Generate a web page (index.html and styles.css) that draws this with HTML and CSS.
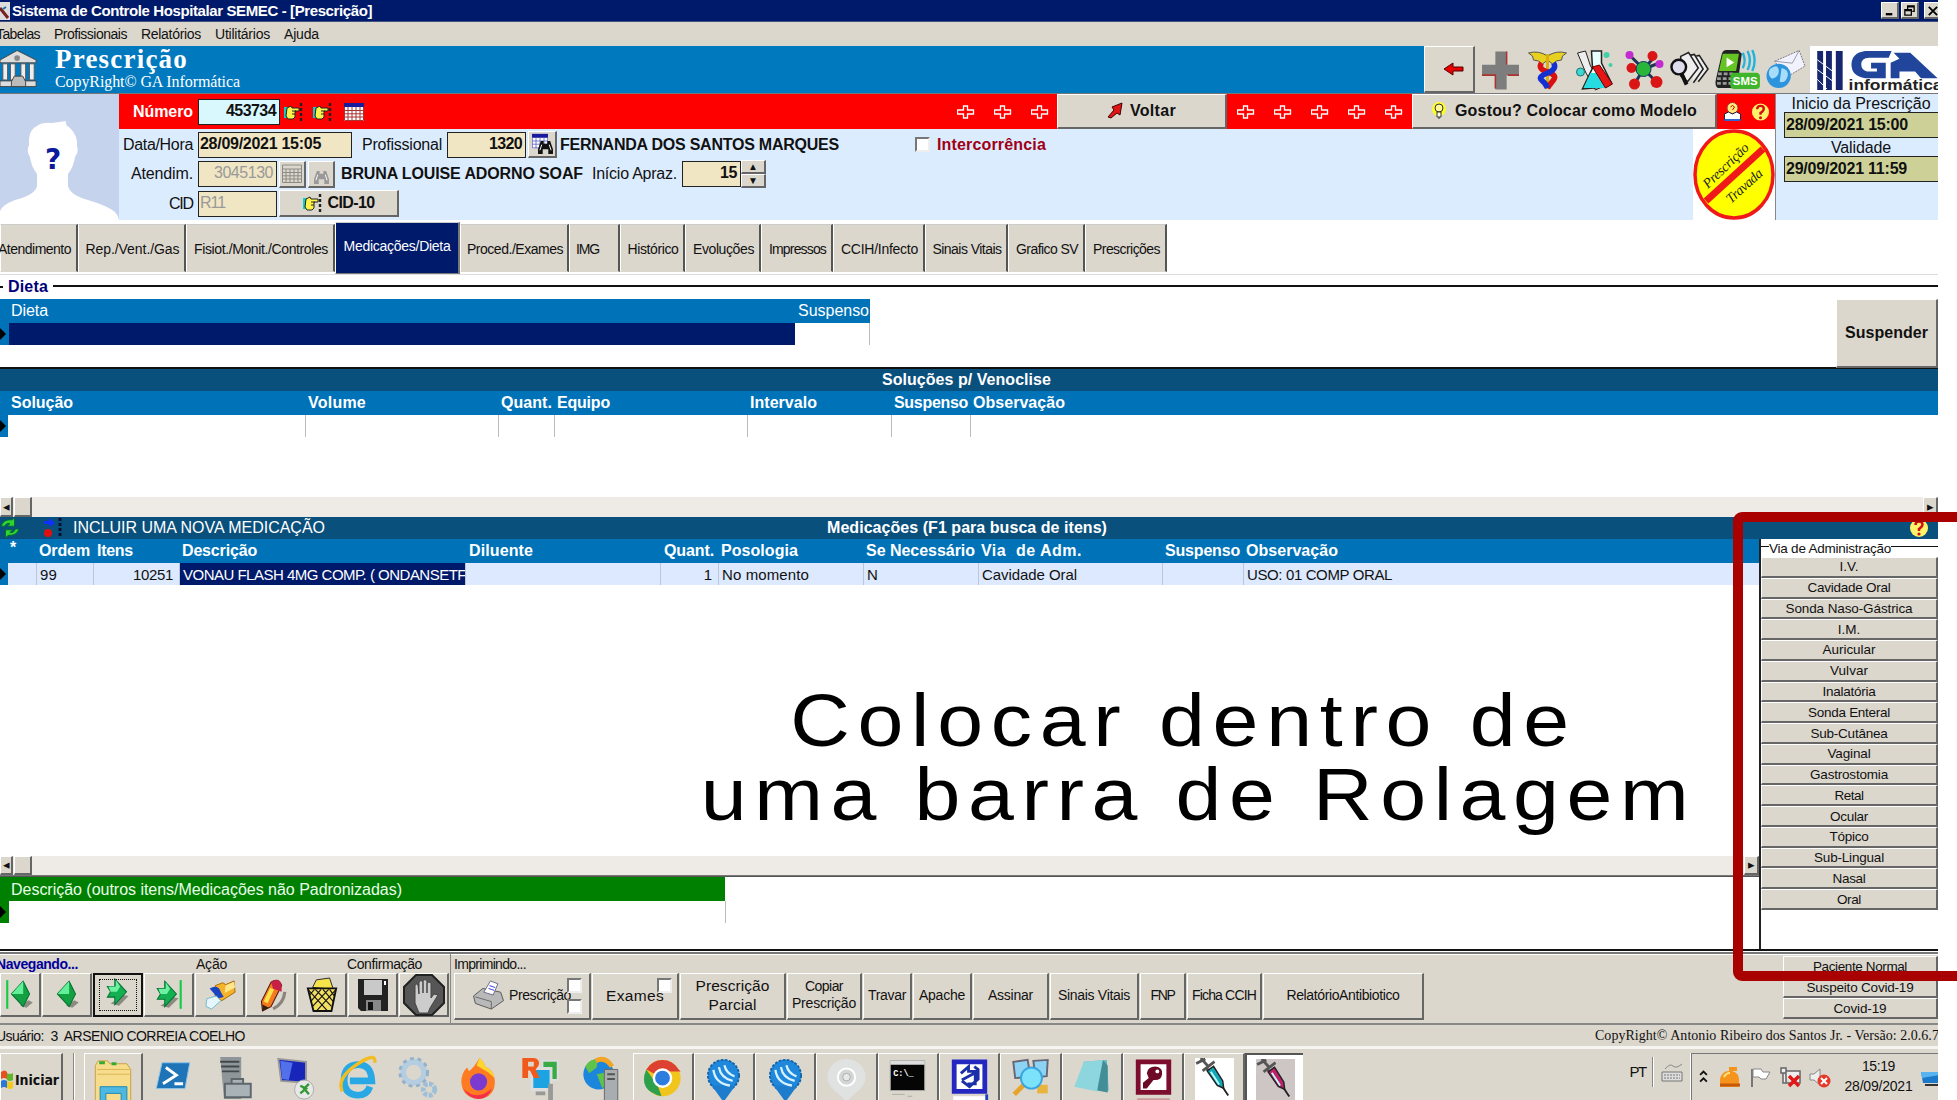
FILE: index.html
```html
<!DOCTYPE html>
<html lang="pt-BR">
<head>
<meta charset="utf-8">
<title>Sistema de Controle Hospitalar SEMEC - [Prescrição]</title>
<link rel="stylesheet" href="styles.css">
</head>
<body>
<svg class="defs" width="0" height="0">
  <defs>
    <symbol id="hand" viewBox="0 0 20 20"><path d="M0 5h4v11H0z" fill="#1cc"/><path d="M3 6l4-2 1 2h7v3h-4v6l-2 2H4L2 14z" fill="#fff34a" stroke="#222" stroke-width="1"/><path d="M8 9h4M8 12h3" stroke="#222"/><path d="M17 1v18" stroke="#222" stroke-width="2.4" stroke-dasharray="3 2"/></symbol>
    <symbol id="cal" viewBox="0 0 20 20"><path d="M0 1h20v18H0z" fill="#fff"/><path d="M0 1h20v4H0z" fill="#1a1a9c"/><path d="M.5 5v13.500h19V5M.5 8.500h19M.5 11.800h19M.5 15h19M4 5v14M8 5v14M12 5v14M16 5v14" stroke="#a33" fill="none"/></symbol>
    <symbol id="calblue" viewBox="0 0 20 20"><path d="M0 1h20v18H0z" fill="#fff"/><path d="M0 1h20v5H0z" fill="#1a1a9c"/><path d="M.5 5v13.500h19V5M.5 10h19M.5 14h19M5 5v14M10 5v14M15 5v14" stroke="#5560c0" fill="none"/></symbol>
    <symbol id="calgray" viewBox="0 0 20 20"><path d="M.5 1h19v4H.5zM.5 5v13.500h19V5M.5 8.500h19M.5 11.800h19M.5 15h19M4 5v14M8 5v14M12 5v14M16 5v14" stroke="#8d8a85" fill="none"/></symbol>
    <symbol id="bino" viewBox="0 0 16 15"><path d="M3 1h3v3h4V1h3l3 9v5h-5v-5H5v5H0v-5z" fill="currentColor"/><path d="M2 11l2-6M14 11l-2-6" stroke="#fff"/></symbol>
    <symbol id="cross" viewBox="0 0 18 14"><path d="M6.500 1h4v4h6v4h-6v4h-4V9h-6V5h6z" fill="#f00" stroke="#fff" stroke-width="1.300"/></symbol>
    <symbol id="green-right" viewBox="0 0 24 28"><path d="M5 24l8 2 9-9-5-1z" fill="#8b8b80"/><path d="M2 8h7V1l11 12L9 25v-7H2l3-5z" fill="#12b050" stroke="#067337"/><path d="M3 8h7V2l4 6-3 5H5z" fill="#6df0a0"/></symbol>
    <symbol id="green-left" viewBox="0 0 24 28"><path d="M10 24l6 2 6-5-4-2z" fill="#8b8b80"/><path d="M2 13L13 1l6 12-6 12z" fill="#12a040" stroke="#067337"/><path d="M2 13L13 1v12z" fill="#63ee98"/></symbol>
    <symbol id="pin" viewBox="0 0 38 48"><circle cx="19" cy="19" r="17" fill="#1f87dc" stroke="#1264a8" stroke-width="2" stroke-dasharray="3 1.500"/><path d="M6 30l13 18 13-18z" fill="#1d7ccc"/><path d="M8 13q2 15 18 17M14 10q2 12 15 15M20 8q2 9 11 12" stroke="#d8f2ff" stroke-width="2.500" fill="none"/></symbol>
    <symbol id="ask" viewBox="0 0 20 20"><circle cx="10" cy="10" r="9" fill="#fff36a"/><path d="M6.500 7q0-3.500 3.500-3.500t3.500 3q0 2-3.500 4.500v2" fill="none" stroke="#d31010" stroke-width="2.500"/><circle cx="10" cy="16" r="1.600" fill="#d31010"/></symbol>
    <symbol id="syringe" viewBox="0 0 40 48"><path d="M5 0l8 9M0 6l10-5M7 14L20 4M10 10l5 5" stroke="#555" stroke-width="3"/><path d="M12 14l7-5 10 16 1 8-7-3z" fill="currentColor" stroke="#222" stroke-width="1.600"/><path d="M16 15l9 14" stroke="#bff" stroke-width="2"/><path d="M29 32l6 9" stroke="#222" stroke-width="2"/></symbol>
  </defs>
</svg>

<div class="app">
  <header class="titlebar">
    <svg class="appicon" viewBox="0 0 10 18"><path d="M0 0h10v18H0z" fill="#ddd"/><path d="M0 6l8 10" stroke="#722" stroke-width="3"/><path d="M3 7l3-2" stroke="#17a" stroke-width="2"/></svg>
    <span class="title" data-w="360">Sistema de Controle Hospitalar SEMEC - [Prescrição]</span>
    <div class="winbtns"><i class="bevel"><svg viewBox="0 0 16 14"><path d="M4 11h7" stroke="#000" stroke-width="2.500"/></svg></i><i class="bevel"><svg viewBox="0 0 16 14"><path d="M6 6V2h7v6h-2M6 3h7M3 6h7v6H3zM3 7h7" stroke="#000" fill="none" stroke-width="1.400"/></svg></i><i class="bevel last"><svg viewBox="0 0 16 14"><path d="M4 3l9 9M13 3l-9 9" stroke="#000" stroke-width="2"/></svg></i></div>
  </header>
  <nav class="menubar"><span data-w="44">Tabelas</span><span data-w="73">Profissionais</span><span data-w="60">Relatórios</span><span data-w="55">Utilitários</span><span data-w="35">Ajuda</span></nav>

  <section class="banner">
    <svg class="temple" viewBox="0 0 40 40"><path d="M0 10L18 0l20 10v3H0zM0 32h38v6H0z" fill="#ddd" stroke="#444"/><path d="M3 14h5v17H3zM11 14h5v17h-5zM22 14h5v17h-5zM31 14h5v17h-5z" fill="#eee" stroke="#555"/><path d="M12 33l3-6h9l3 6v5H12z" fill="#bbb" stroke="#444"/><circle cx="18" cy="8" r="3" fill="#888"/></svg>
    <div class="brand"><h1 data-w="133">Prescrição</h1><p data-w="185">CopyRight© GA Informática</p></div>
    <div class="bevel back"><svg viewBox="0 0 20 14"><path d="M0 7l9-6v4h10v4H9v4z" fill="#e80000" stroke="#500"/></svg></div>
    <div class="tools">
      <svg viewBox="0 0 38 38"><path d="M14 1h11v13h12v10H25v14H14V24H1V14h13z" fill="#7d7d7d"/><path d="M25 1v13M1 24h13v13M26 24h11" stroke="#a33" stroke-width="1.500" fill="none"/></svg>
      <svg viewBox="0 0 38 40"><path d="M19 6Q10 0 0 3l4 3 1 4 5 1 4 3 5-4 5 4 4-3 5-1 1-4 4-3Q28 0 19 6z" fill="#e8d020" stroke="#555"/><path d="M19 4v35" stroke="#d9b010" stroke-width="3"/><path d="M13 13q-4 6 6 9t6 8-6 8" stroke="#d81010" stroke-width="5.500" fill="none"/><path d="M25 13q4 6-6 10t-6 7 6 8" stroke="#1530d0" stroke-width="5.500" fill="none"/></svg>
      <svg viewBox="0 0 38 40"><path d="M1 3l8-2 5 15 13 20-8 4L9 22z" fill="#eee" stroke="#222"/><path d="M15 1h10v12l10 20-6 4L6 39l10-21z" fill="#e8ffff" stroke="#222" stroke-width="1.500"/><path d="M14 23h8l8 15H7z" fill="#26dce0"/><path d="M16 17l7-2 13 19-7 4z" fill="#e51515" stroke="#600"/><circle cx="30" cy="5" r="3" fill="#3fd2a8"/><circle cx="34" cy="15" r="2" fill="#3fd2a8"/><circle cx="4" cy="22" r="4" fill="#40d8d0" stroke="#177"/></svg>
      <svg viewBox="0 0 38 40"><path d="M5 6l13 13L29 7M18 19L9 34M18 19l13 13M18 19L5 19M18 19l16-6" stroke="#235" stroke-width="3" fill="none"/><circle cx="4" cy="5" r="4" fill="#c22bd0"/><circle cx="6" cy="18" r="5" fill="#d91515"/><circle cx="27" cy="6" r="5" fill="#d91515"/><circle cx="34" cy="14" r="4" fill="#c22bd0"/><circle cx="18" cy="19" r="7.500" fill="#27b53a" stroke="#136"/><circle cx="9" cy="34" r="5.500" fill="#d91515"/><circle cx="31" cy="32" r="6" fill="#d91515"/></svg>
      <svg viewBox="0 0 40 38"><path d="M26 5l4-1 9 14-10 13M20 4l5-1 9 15-10 14" fill="#eee" stroke="#222" stroke-width="1.600"/><path d="M11 5l8-4 10 16-11 14-7-6z" fill="#eee" stroke="#222" stroke-width="1.600"/><circle cx="9" cy="16" r="7.500" fill="#dde" stroke="#111" stroke-width="2.500"/><path d="M12 23l5 11" stroke="#111" stroke-width="4"/></svg>
      <svg class="phone" viewBox="0 0 48 42"><path d="M7 4Q8 0 12 0h12l4 4-5 36H3Q-1 38 1 30z" fill="#222"/><path d="M8 4h17l-3 18H4z" fill="#65c423"/><path d="M12 8l8 5-8 5z" fill="#fff"/><path d="M3 25h16M2 30h16M2 35h16" stroke="#999" stroke-width="3" stroke-dasharray="4 2"/><path d="M29 3q4 8 0 16M34 1q5 10 0 20M39 0q5 11 0 22" stroke="#22b4dd" stroke-width="2.500" fill="none"/><rect x="16" y="24" width="31" height="17" rx="4" fill="#3fb52c"/><text x="31.500" y="37" class="sms">SMS</text></svg>
      <svg viewBox="0 0 40 40"><path d="M9 11L34 0l6 16-20 12z" fill="#f2f2ff" stroke="#777" stroke-dasharray="2 1"/><path d="M9 11l18 2L34 0" fill="none" stroke="#99a"/><circle cx="13" cy="26" r="12.500" fill="#2c93dd"/><path d="M4 19q8-6 9 1t-7 9q-5-4-2-10M16 18q8 2 6 9t-8 5z" fill="#a8dcfb"/></svg>
    </div>
    <div class="logo"><svg viewBox="0 0 128 48"><path d="M6 5h6v40H6zM15 5h6v40h-6zM25 5h7v40h-7z" fill="#17276f"/><path d="M6 14l16 12M6 24l16 12M6 34l10 10" stroke="#fff"/><path d="M82 5H55q-14 2-14 14t14 14h21V17H61v6h6v3H57q-6-1-6-7 0-7 8-7h20zM84 7h17l28 26h-17l-6-7H90v7h-9V17l9-4z" fill="#20459b"/><text x="38" y="45" class="logotext" textLength="96" lengthAdjust="spacingAndGlyphs">informática</text></svg></div>
  </section>

  <section class="record">
    <div class="photo"><svg viewBox="0 0 119 126"><path d="M0 126v-9q2-6 15-11 20-5 22-14V80q-6-8-7-17-4-6-1-12-1-15 8-19 5-4 15-3l14-2q-1 4 3 6 9 8 8 19 2 6-2 11-1 9-7 17v12q2 9 20 14 20 6 27 12 3 3 4 8z" fill="#fff"/><text x="45" y="75" class="q">?</text></svg></div>
    <div class="fields">
      <div class="redband">
        <span class="lbl" data-w="60">Número</span><span class="inp cyan"><b data-w="50">453734</b></span>
        <svg class="i1"><use href="#hand"/></svg><svg class="i1"><use href="#hand"/></svg><svg class="i1"><use href="#cal"/></svg>
        <span class="crosses c3"><svg><use href="#cross"/></svg><svg><use href="#cross"/></svg><svg><use href="#cross"/></svg></span>
        <span class="bevel voltar"><svg viewBox="0 0 16 16"><path d="M15 0l-2 12-3-2-6 5-3-1 6-7-2-3z" fill="#e01515" stroke="#400"/></svg><b data-w="46">Voltar</b></span>
        <span class="crosses c5"><svg><use href="#cross"/></svg><svg><use href="#cross"/></svg><svg><use href="#cross"/></svg><svg><use href="#cross"/></svg><svg><use href="#cross"/></svg></span>
        <span class="bevel modelo"><svg viewBox="0 0 16 18"><circle cx="8" cy="7" r="7" fill="#ffff20"/><circle cx="8" cy="6" r="4" fill="#fff79a" stroke="#333"/><path d="M6 10h4v5H6zM7 16h2" fill="#ffe" stroke="#333"/></svg><b data-w="242">Gostou? Colocar como Modelo</b></span>
        <span class="redicons"><svg viewBox="0 0 18 20"><circle cx="9" cy="6" r="5.500" fill="#ffe97a" stroke="#a33"/><path d="M7 5q2-3 4 0l-2 3" stroke="#c00" fill="none"/><path d="M1 12l4-2 4 2 4-2 4 2v6H1z" fill="#fff" stroke="#224"/><path d="M1 18h16" stroke="#36c" stroke-width="2"/></svg><svg><use href="#ask"/></svg></span>
      </div>
      <div class="form">
        <div class="rows">
          <div class="row r1"><span class="lbl" data-w="70">Data/Hora</span><span class="inp l"><b data-w="121">28/09/2021 15:05</b></span><span class="lbl" data-w="80">Profissional</span><span class="inp"><b data-w="33">1320</b></span><span class="bevel sq two"><svg class="cal"><use href="#calblue"/></svg><svg class="bino"><use href="#bino"/></svg></span><b class="name" data-w="279">FERNANDA DOS SANTOS MARQUES</b><i class="check"></i><b class="inter" data-w="109">Intercorrência</b></div>
          <div class="row r2"><span class="lbl" data-w="62">Atendim.</span><span class="inp off"><span data-w="59">3045130</span></span><span class="bevel sq"><svg class="cal"><use href="#calgray"/></svg></span><span class="bevel sq"><svg class="bino off"><use href="#bino"/></svg></span><b class="name clip" data-w="242">BRUNA LOUISE ADORNO SOAF</b><span class="lbl" data-w="85">Início Apraz.</span><span class="inp"><b data-w="17">15</b></span><span class="spin"><i class="bevel">▲</i><i class="bevel">▼</i></span></div>
          <div class="row r3"><span class="lbl" data-w="24">CID</span><span class="inp l off"><span data-w="25">R11</span></span><span class="bevel cid"><svg class="i1"><use href="#hand"/></svg><b data-w="47">CID-10</b></span></div>
        </div>
        <div class="locked"><svg viewBox="0 0 82 91"><rect width="82" height="91" fill="#fff"/><ellipse cx="41" cy="45.500" rx="39" ry="43.500" fill="#ff0" stroke="#f01818" stroke-width="3.500"/><path d="M13 72L70 20" stroke="#f01818" stroke-width="7"/><text class="script" transform="translate(15 60) rotate(-44)" textLength="58">Prescrição</text><text class="script" transform="translate(38 75) rotate(-42)" textLength="44">Travada</text></svg></div>
      </div>
    </div>
    <aside class="validity"><span class="vl" data-w="139">Inicio da Prescrição</span><span class="inp l olive"><b data-w="122">28/09/2021 15:00</b></span><span class="vl" data-w="60">Validade</span><span class="inp l olive"><b data-w="121">29/09/2021 11:59</b></span></aside>
  </section>

  <nav class="tabs"><span><i data-w="73">Atendimento</i></span><span><i data-w="94">Rep./Vent./Gas</i></span><span><i data-w="134">Fisiot./Monit./Controles</i></span><span class="sel"><i data-w="107">Medicações/Dieta</i></span><span><i data-w="96">Proced./Exames</i></span><span class="img"><i data-w="23">IMG</i></span><span><i data-w="51">Histórico</i></span><span><i data-w="61">Evoluções</i></span><span><i data-w="57">Impressos</i></span><span><i data-w="77">CCIH/Infecto</i></span><span><i data-w="69">Sinais Vitais</i></span><span><i data-w="62">Grafico SV</i></span><span><i data-w="67">Prescrições</i></span></nav>

  <section class="diet">
    <div class="legend"><hr><b data-w="40">Dieta</b><hr></div>
    <div class="dietbody">
      <div class="dtable"><div class="dhead"><span data-w="37">Dieta</span><span data-w="71">Suspenso</span></div><div class="drow"><i class="mark"></i><i class="fill"></i><i></i></div></div>
      <div class="bevel suspender"><b data-w="83">Suspender</b></div>
    </div>
  </section>

  <section class="solutions">
    <div class="band"><b data-w="169">Soluções p/ Venoclise</b></div>
    <div class="thead sol"><b data-w="62">Solução</b><b data-w="58">Volume</b><b data-w="51">Quant.</b><b data-w="53">Equipo</b><b data-w="67">Intervalo</b><b data-w="74">Suspenso</b><b data-w="92">Observação</b></div>
    <div class="trow sol"><i class="mark"></i><i></i><i></i><i></i><i></i><i></i><i></i></div>
    <div class="hscroll"><i class="bevel arr">◂</i><i class="bevel thumb"></i><i class="bevel arr end">▸</i></div>
  </section>

  <div class="lower">
    <div class="band meds"><svg viewBox="0 0 22 22"><path d="M1 9q3-8 12-7l3-2v9H8l3-3q-4-1-6 3zM21 12q-3 8-12 7l-3 3v-9h8l-3 3q4 1 6-4z" fill="#2fd52f" stroke="#063"/></svg><svg viewBox="0 0 20 20"><path d="M1 3h5V0l6 5-6 4V6H1z" fill="#1030ff"/><circle cx="5" cy="15" r="4" fill="#e01010"/><path d="M17 0v20" stroke="#013" stroke-width="3" stroke-dasharray="3 2"/></svg><span class="include" data-w="252">INCLUIR UMA NOVA MEDICAÇÃO</span><b data-w="280">Medicações (F1 para busca de itens)</b><svg class="help"><use href="#ask"/></svg></div>
    <div class="split">
      <div class="left">
        <div class="thead med"><b>*</b><b data-w="51">Ordem</b><b data-w="36">Itens</b><b data-w="75">Descrição</b><b data-w="64">Diluente</b><b data-w="50">Quant.</b><b data-w="77">Posologia</b><b data-w="109">Se Necessário</b><b data-w="101">Via  de Adm.</b><b data-w="75">Suspenso</b><b data-w="92">Observação</b></div>
        <div class="trow med"><i class="mark"></i><span></span><span><u data-w="17">99</u></span><span class="r"><u data-w="40">10251</u></span><span class="fill"><u data-w="283">VONAU FLASH 4MG COMP. ( ONDANSETF</u></span><span></span><span class="r"><u>1</u></span><span><u data-w="87">No momento</u></span><span><u>N</u></span><span><u data-w="95">Cavidade Oral</u></span><span></span><span class="noline"><u data-w="145">USO: 01 COMP ORAL</u></span></div>
        <div class="note"><p data-w="715">Colocar dentro de</p><p data-w="905">uma barra de Rolagem</p></div>
        <div class="hscroll"><i class="bevel arr">◂</i><i class="bevel thumb"></i><i class="bevel arr end">▸</i></div>
        <div class="others"><div class="ohead"><span data-w="391">Descrição (outros itens/Medicações não Padronizadas)</span></div><div class="orow"><i class="mark"></i></div></div>
      </div>
      <aside class="routes">
        <div class="rlegend"><hr><span data-w="122">Via de Administração</span><hr></div>
        <div class="bevel"><i>I.V.</i></div><div class="bevel"><i data-w="83">Cavidade Oral</i></div><div class="bevel"><i data-w="127">Sonda Naso-Gástrica</i></div><div class="bevel"><i>I.M.</i></div><div class="bevel"><i data-w="53">Auricular</i></div><div class="bevel"><i data-w="38">Vulvar</i></div><div class="bevel"><i data-w="53">Inalatória</i></div><div class="bevel"><i data-w="82">Sonda Enteral</i></div><div class="bevel"><i data-w="77">Sub-Cutânea</i></div><div class="bevel"><i data-w="43">Vaginal</i></div><div class="bevel"><i data-w="78">Gastrostomia</i></div><div class="bevel"><i data-w="29">Retal</i></div><div class="bevel"><i data-w="38">Ocular</i></div><div class="bevel"><i data-w="39">Tópico</i></div><div class="bevel"><i data-w="70">Sub-Lingual</i></div><div class="bevel"><i data-w="33">Nasal</i></div><div class="bevel"><i data-w="24">Oral</i></div>
      </aside>
    </div>
  </div>

  <section class="toolbar">
    <div class="group nav">
      <div class="labels"><b data-w="82">Navegando...</b><span data-w="31">Ação</span><span data-w="75">Confirmação</span></div>
      <div class="btns">
        <i class="bevel"><svg viewBox="0 0 30 32"><path d="M3 2v27" stroke="#1c4" stroke-width="2"/><use href="#green-left" x="5" y="2" width="24" height="28"/></svg></i>
        <i class="bevel"><svg viewBox="0 0 30 32"><use href="#green-left" x="4" y="2" width="24" height="28"/></svg></i>
        <i class="bevel focus"><svg viewBox="0 0 30 32"><use href="#green-right" x="3" y="0" width="24" height="28"/></svg></i>
        <i class="bevel"><svg viewBox="0 0 30 32"><path d="M26 2v27" stroke="#1c4" stroke-width="2"/><use href="#green-right" x="2" y="2" width="24" height="28"/></svg></i>
        <i class="bevel"><svg viewBox="0 0 34 32"><path d="M12 6l8-3 3 2 9-4 1 12-14 9-7-4z" fill="#f5b32c" stroke="#a60"/><path d="M23 6l9-4 1 6-11 6z" fill="#ffe68a"/><path d="M6 9q9-5 12 4l3 5-7 2-3-5z" fill="#1b45c0"/><path d="M3 20l10-3 5 5-10 9-6-3z" fill="#e6f6fa" stroke="#6bc"/></svg></i>
        <i class="bevel"><svg viewBox="0 0 30 32"><path d="M17 29q10-5 11-16" stroke="#8a857c" stroke-width="3" fill="none"/><path d="M6 22L15 4q7-5 10 3L15 27l-8 4z" fill="#f47c20" stroke="#511"/><path d="M15 4q8-6 10 3v6l-8-3z" fill="#c82045"/><path d="M10 23l6-13" stroke="#ffe24a" stroke-width="4"/><path d="M7 31v-6l6 3z" fill="#321"/></svg></i>
        <i class="bevel"><svg viewBox="0 0 32 36"><path d="M6 10L10 2l14-2 4 12z" fill="#f7e34a" stroke="#222"/><path d="M1 11h30l-5 24H7z" fill="#f2df62" stroke="#111" stroke-width="2"/><path d="M2 13l20 22M9 12l17 18M17 12l11 13M24 12l5 7M30 13L10 35M23 12L6 30M15 12L4 25M8 12l-5 6" stroke="#111" stroke-width="1.200"/></svg></i>
        <i class="bevel"><svg viewBox="0 0 32 34"><path d="M1 1h30v32H4l-3-3z" fill="#222"/><path d="M7 2h18v15H7z" fill="#c9c9c9"/><path d="M9 22h15v11H9z" fill="#888"/><path d="M11 24h5v8h-5z" fill="#111"/><path d="M27 3h2v4h-2z" fill="#fff"/></svg></i>
        <i class="bevel wide"><svg viewBox="0 0 40 40"><path d="M12 0h16l12 12v16L28 40H12L0 28V12z" fill="#565656" stroke="#222" stroke-width="2"/><path d="M11 10q2-2 3 0l1 9V7q2-3 4 0v11-12q2-3 4 0v12-10q2-2 4 0v15l3-4 4 1-8 13-2 5H15l-4-10z" fill="#ccc" stroke="#444"/></svg></i>
      </div>
    </div>
    <div class="group print">
      <div class="labels"><span data-w="72">Imprimindo...</span></div>
      <div class="btns">
        <div class="bevel b1"><svg viewBox="0 0 34 32"><path d="M1 17l10-8 19 4 3 9-13 9L3 25z" fill="#b9b9b9" stroke="#555"/><path d="M3 18l17 5v8" stroke="#666" fill="none"/><path d="M12 13l7-12 8 3-5 12z" fill="#fff" stroke="#668"/><path d="M17 9l6 2M18 6l6 2" stroke="#33d"/></svg><span data-w="62">Prescrição</span><i class="check"></i><i class="check"></i></div>
        <div class="bevel b2"><span data-w="58">Exames</span><i class="check"></i></div>
        <div class="bevel big"><span data-w="74">Prescrição</span><span data-w="48">Parcial</span></div>
        <div class="bevel"><span data-w="38">Copiar</span><span data-w="64">Prescrição</span></div>
        <div class="bevel"><span data-w="38">Travar</span></div>
        <div class="bevel"><span data-w="46">Apache</span></div>
        <div class="bevel"><span data-w="45">Assinar</span></div>
        <div class="bevel tall"><span data-w="72">Sinais Vitais</span></div>
        <div class="bevel"><span data-w="24">FNP</span></div>
        <div class="bevel"><span data-w="64">Ficha CCIH</span></div>
        <div class="bevel"><span data-w="113">RelatórioAntibiotico</span></div>
      </div>
    </div>
    <div class="covid"><div class="bevel"><span data-w="94">Paciente Normal</span></div><div class="bevel"><span data-w="107">Suspeito Covid-19</span></div><div class="bevel"><span data-w="53">Covid-19</span></div></div>
  </section>

  <div class="status"><span data-w="249">Usuário:  3  ARSENIO CORREIA COELHO</span><span class="copy" data-w="351">CopyRight© Antonio Ribeiro dos Santos Jr. - Versão: 2.0.6.75</span></div>

  <footer class="taskbar">
    <div class="bevel start"><svg viewBox="0 0 12 20"><path d="M0 2q4-3 6 0v7q-3-2-6 0z" fill="#e85020"/><path d="M6 3q3 2 6 0v7q-3 2-6 0z" fill="#5cb82c"/><path d="M0 11q3-2 6 0v7q-3-2-6 0z" fill="#2878d8"/><path d="M6 11q3 2 6 0v7q-3 2-6 0z" fill="#f7c81c"/></svg><b data-w="44">Iniciar</b></div>
    <i class="sep"></i>
    <div class="task raised"><svg viewBox="0 0 40 46"><path d="M1 8l3-5h10l2 3h18l4 6v34H1z" fill="#f6dc8b" stroke="#c9a040"/><path d="M5 5h6M18 6h5" stroke="#3a3" stroke-width="3"/><path d="M3 12h34M3 17h34" stroke="#d8b454"/><path d="M6 46V30h28v16h-6V37H12v9z" fill="#4db8e0" stroke="#1d86b4"/></svg></div>
    <div class="task"><svg viewBox="0 0 40 46"><path d="M8 6h29l-5 27H2z" fill="#1f74b8" stroke="#8ac4ea"/><path d="M12 11l11 8-14 9M21 28h9" stroke="#fff" stroke-width="3" fill="none"/></svg></div>
    <div class="task"><svg viewBox="0 0 40 46"><path d="M5 0h22v44H9z" fill="#8f9699"/><path d="M5 5h20M6 10h19M7 15h18" stroke="#40484c" stroke-width="2"/><path d="M10 28h27v14H10zM17 28v-5h12v5" fill="#a9b3b7" stroke="#5c666b" stroke-width="2"/></svg></div>
    <div class="task"><svg viewBox="0 0 40 46"><path d="M2 2l29 3v22L5 25z" fill="#1726b8" stroke="#999" stroke-width="2"/><path d="M4 4l13 2-4 18-7-1z" fill="#5270ea"/><circle cx="29" cy="34" r="10" fill="#e8e8e8" stroke="#aaa"/><path d="M25 30l6 3-6 5M34 28l-5 5 5 6" stroke="#393" stroke-width="2.500" fill="none"/></svg></div>
    <div class="task"><svg viewBox="0 0 40 46"><path d="M33 31q-3 9-13 9Q6 39 6 24T20 8t15 17H12" fill="none" stroke="#29a8e6" stroke-width="7"/><path d="M4 36Q-2 22 19 8T38 6" fill="none" stroke="#f2bd22" stroke-width="3.500"/></svg></div>
    <div class="task"><svg viewBox="0 0 40 46"><circle cx="15" cy="16" r="11" fill="none" stroke="#b4cde0" stroke-width="6"/><circle cx="15" cy="16" r="14.500" fill="none" stroke="#93b1c8" stroke-width="3" stroke-dasharray="4 4"/><circle cx="31" cy="34" r="6" fill="none" stroke="#9dbfd9" stroke-width="5" stroke-dasharray="4 1.500"/></svg></div>
    <div class="task"><svg viewBox="0 0 40 46"><path d="M20 1q5 4 6 9 9 4 10 14 1 18-17 20Q2 43 1 26 1 17 7 11l2 4q6-5 11-14z" fill="#ff7b22"/><path d="M20 1q5 4 6 9 8 4 10 12l-7-6-12-7z" fill="#ffd62e"/><circle cx="19" cy="26" r="9" fill="#7b3bd0"/><path d="M3 33q14 14 30 0-4 11-14 11T3 33z" fill="#f5304b"/></svg></div>
    <div class="task"><svg viewBox="0 0 40 46"><path d="M22 4h16v20H22z" fill="#38ab45" stroke="#ddd" stroke-width="2"/><path d="M11 12h20v22H11z" fill="#1ca4e2" stroke="#ddd" stroke-width="3"/><path d="M1 1h12q7 1 5 8l-3 4 4 9h-6l-4-8H7v8H1zM7 5v5h6V5z" fill="#f15a1c" fill-rule="evenodd"/><path d="M15 36h10v4H15zM28 28h5v17h-5z" fill="#999"/></svg></div>
    <div class="task"><svg viewBox="0 0 40 46"><circle cx="17" cy="18" r="16" fill="#1c86dc"/><path d="M3 10q5-9 13-7l-1 8-8 6zM15 18l10-2 4 8-8 9z" fill="#5fc24a"/><path d="M14 4q10-5 17 6" stroke="#f3a422" stroke-width="5" fill="none"/><path d="M23 13h14v33H23z" fill="#a7adb0" stroke="#666"/><path d="M26 18h8M26 23h8" stroke="#555" stroke-width="2"/></svg></div>
    <div class="task raised"><svg viewBox="0 0 40 46"><circle cx="20" cy="21" r="19" fill="#f2c51d"/><path d="M20 21L3 12Q9 2 20 2t17 10l2 2H20z" fill="#dd4132"/><path d="M3 12l12 17 4 11Q-6 34 3 12z" fill="#2da04e"/><circle cx="20" cy="21" r="9" fill="#2d7de0" stroke="#fff" stroke-width="2.500"/></svg></div>
    <div class="task raised"><svg><use href="#pin"/></svg></div>
    <div class="task raised"><svg><use href="#pin"/></svg></div>
    <div class="task raised"><svg viewBox="0 0 40 46"><path d="M0 20a20 19 0 0 1 40 0q0 9-12 18l-8 8-8-8Q0 29 0 20z" fill="#e0e1e1"/><circle cx="20" cy="20" r="9" fill="#d4d5d5" stroke="#fff" stroke-width="2"/><circle cx="20" cy="20" r="4" fill="#e8e8e8" stroke="#aaa"/></svg></div>
    <div class="task raised"><svg viewBox="0 0 40 46"><path d="M2 3h36v31H2z" fill="#050505" stroke="#aaa"/><path d="M2 3h36v4H2z" fill="#ddd"/><text x="5" y="19" class="cmd">C:\_</text><path d="M4 38h13M20 40h5" stroke="#aaa"/></svg></div>
    <div class="task raised"><svg viewBox="0 0 40 46"><path d="M4 4h32v31H4z" fill="#fff" stroke="#2428c0" stroke-width="5"/><path d="M11 16l8-7v5h7v13h-8M25 9l4 3v10l-9 8-8-6M12 23l13-7" stroke="#1b2fa8" stroke-width="3" fill="none"/><path d="M3 40h34v6H3z" fill="#fff"/><path d="M38 38v8" stroke="#24b" stroke-width="3"/></svg></div>
    <div class="task raised"><svg viewBox="0 0 40 46"><path d="M2 4l15-2 3 18-16 1zM23 3l15-1-1 17-12 1z" fill="#8cd3f4" stroke="#667" stroke-width="2"/><path d="M14 27L3 38" stroke="#e8a32a" stroke-width="5"/><path d="M27 28h11v9H27z" fill="#e8b43c"/><circle cx="21" cy="21" r="11" fill="#7ce1fb" stroke="#3aa5dd" stroke-width="2"/></svg></div>
    <div class="task raised"><svg viewBox="0 0 40 46"><path d="M12 4l24-2 2 32-32-4z" fill="#5fb8c4"/><path d="M12 4l20-2-6 33-24-5z" fill="#8ed6dd"/><path d="M32 2l5 6v28l-11-2z" fill="#438e96"/></svg></div>
    <div class="task raised"><svg viewBox="0 0 40 46"><path d="M4 4h32v32H4z" fill="#fff" stroke="#7c0d2d" stroke-width="5"/><path d="M13 16q1-7 9-7 8 1 7 8t-9 6l-7 9H9v-6l6-5z" fill="#6d0b27"/><circle cx="24" cy="14" r="2" fill="#fff"/><path d="M3 42h34v4H3z" fill="#c99"/></svg></div>
    <div class="task raised teal"><svg><use href="#syringe"/></svg></div>
    <div class="task pressed"><svg><use href="#syringe"/></svg></div>
    <div class="lang"><span data-w="16">PT</span><i class="sep"></i><svg viewBox="0 0 22 20"><path d="M1 9h20v9H1z" fill="#ddd" stroke="#777"/><path d="M3 12h16M3 15h16" stroke="#777" stroke-dasharray="2 1"/><path d="M4 6Q9 0 12 3t9-2" stroke="#888" fill="none"/></svg></div>
    <div class="tray">
      <svg class="chev" viewBox="0 0 8 14"><path d="M1 6l3-3 3 3M1 12l3-3 3 3" stroke="#111" stroke-width="1.600" fill="none"/></svg>
      <svg viewBox="0 0 22 22"><path d="M1 13q2-8 9-8V1h8v4h-5q7 2 7 8v8H1z" fill="#f5951d"/><path d="M1 19h20" stroke="#c45a0a" stroke-width="3"/><path d="M5 11q2-4 6-4" stroke="#ffe27c" stroke-width="2" fill="none"/></svg>
      <svg viewBox="0 0 22 22"><path d="M3 3v18" stroke="#777" stroke-width="2"/><path d="M4 3h8l2 3h7l-4 7h-5l-2-2H4z" fill="#fff" stroke="#888"/></svg>
      <svg viewBox="0 0 22 22"><path d="M7 5h14v12H7zM2 2h5v5H2zM4 7v10h8" fill="#eee" stroke="#666" stroke-width="1.500"/><path d="M10 10l10 10M20 10L10 20" stroke="#e01818" stroke-width="3.500"/></svg>
      <svg viewBox="0 0 22 22"><path d="M1 8h4l6-5v16l-6-5H1z" fill="#eee" stroke="#888"/><circle cx="15" cy="15" r="6.500" fill="#e53929"/><path d="M12 12l6 6M18 12l-6 6" stroke="#fff" stroke-width="2"/></svg>
      <div class="clock"><span data-w="33">15:19</span><span data-w="68">28/09/2021</span></div>
      <svg class="mon" viewBox="0 0 18 16"><path d="M0 1h18v11H2z" fill="#1c78c8"/><path d="M0 1h18v3L1 7z" fill="#57b4f0"/><path d="M4 13h14v2H4z" fill="#333"/></svg>
    </div>
  </footer>
</div>
<div class="highlight"></div>
<script src="fit.js"></script>
</body>
</html>
```
FILE: styles.css
```css
* { box-sizing: border-box; }
body { margin: 0; width: 1957px; height: 1100px; overflow: hidden; background: #fff; position: relative; font: 14px "Liberation Sans", Arial, sans-serif; color: #111; }
i, u { font-style: normal; text-decoration: none; }
svg { display: block; overflow: visible; flex: none; }
.defs { position: absolute; }
[data-w] { white-space: pre; display: inline-block; justify-self: start; }
.app { width: 1938px; height: 1100px; overflow: hidden; display: flex; flex-direction: column; }
.app > * { flex: none; }
.bevel { background: #dcd7cd; border: 1px solid; border-color: #fff #666 #666 #fff; border-right-width: 2px; border-bottom-width: 2px; display: flex; align-items: center; justify-content: center; }
.sep { width: 2px; height: 36px; border-left: 1px solid #888; border-right: 1px solid #fff; }

.titlebar { height: 22px; background: #001a6b; color: #fff; display: flex; align-items: center; gap: 2px; border-bottom: 1px solid #405080; }
.appicon { width: 10px; height: 20px; }
.title { font-weight: bold; font-size: 15px; line-height: 20px; }
.winbtns { margin-left: auto; display: flex; gap: 2px; width: 57px; }
.winbtns i { width: 18px; height: 17px; flex: none; }
.winbtns .last { margin-left: 3px; }
.winbtns svg { width: 15px; height: 13px; }
.menubar { height: 24px; background: #dcd7cd; display: flex; gap: 14px; align-items: center; margin-left: -4px; }

.banner { height: 48px; background: #0079be; display: flex; border-bottom: 1px solid #777; }
.temple { width: 38px; height: 39px; margin-top: 4px; }
.brand { width: 1369px; margin-left: 17px; color: #fff; font-family: "Liberation Serif", serif; }
.brand h1 { margin: 0; font-size: 27px; line-height: 27px; height: 27px; display: block; width: max-content; }
.brand p { margin: 0; font-size: 16px; line-height: 18px; display: block; width: max-content; }
.back { width: 51px; }
.back svg { width: 20px; height: 14px; margin-left: 10px; }
.tools { width: 335px; background: #dcd7cd; display: grid; grid-template-columns: 47px 48px 49px 45px 44px 52px 40px; align-items: center; padding-left: 6px; }
.tools svg { width: 39px; height: 40px; }
.tools .phone { width: 48px; }
.sms { font: bold 12px "Liberation Sans", sans-serif; fill: #fff; text-anchor: middle; }
.logo { flex: 1; background: #fff; overflow: hidden; }
.logo svg { width: 128px; height: 47px; }
.logotext { font: bold 15px "Liberation Sans", sans-serif; fill: #222; }

.record { height: 126px; display: grid; grid-template-columns: 119px 1656px 163px; font-size: 16px; }
.photo { background: #c6d3ec; }
.photo svg { width: 119px; height: 126px; }
.q { font: bold 28px "DejaVu Sans", sans-serif; fill: #0c1b9b; }
.fields { display: flex; flex-direction: column; }
.redband { height: 35px; background: #f00; display: grid; align-items: center; grid-template-columns: 79px 82px 4px 20px 9px 20px 11px 19px 594px 100px 170px 185px 305px 58px; }
.redband > * { grid-row: 1; }
.redband > :nth-child(3) { grid-column: 4; }
.redband > :nth-child(4) { grid-column: 6; }
.redband > :nth-child(5) { grid-column: 8; }
.redband .c3 { grid-column: 10; }
.redband .voltar { grid-column: 11; }
.redband .c5 { grid-column: 12; }
.redband .modelo { grid-column: 13; }
.redband .redicons { grid-column: 14; }
.i1 { width: 20px; height: 20px; }
.lbl { justify-self: end; margin-right: 5px; }
.redband .lbl { color: #fff; font-weight: bold; }
.inp { height: 26px; border: 1px solid #222; background: #f0e6c4; display: flex; align-items: center; justify-content: flex-end; padding: 0 3px 2px 1px; }
.inp.l { justify-content: flex-start; }
.inp.off { color: #999; }
.inp.cyan { background: #d8f8fd; }
.inp.olive { background: #cdd197; border-right: 0; padding-bottom: 0; }
.crosses { display: flex; gap: 19px; }
.crosses svg { width: 18px; height: 14px; }
.c5 { justify-self: center; }
.voltar, .modelo { height: 35px; gap: 7px; }
.voltar svg { width: 16px; height: 16px; }
.modelo { gap: 8px; }
.modelo svg { width: 16px; height: 18px; }
.redicons { display: flex; gap: 9px; justify-content: center; }
.redicons svg { width: 19px; height: 20px; }
.form { height: 91px; background: #dcecff; display: flex; justify-content: space-between; }
.rows { display: flex; flex-direction: column; padding-top: 2px; gap: 3px; }
.row { display: grid; height: 26px; align-items: center; }
.r1 { grid-template-columns: 79px 154px 95px 79px 2px 29px 3px 355px 22px 120px; }
.r1 .sq { grid-column: 6; }
.r1 .name { grid-column: 8; }
.r2 { grid-template-columns: 79px 79px 2px 27px 2px 27px 6px 242px 99px 59px 25px; }
.r2 .sq:nth-child(3) { grid-column: 4; }
.r2 .sq:nth-child(4) { grid-column: 6; }
.r2 .name { grid-column: 8; }
.r3 { grid-template-columns: 79px 79px 2px 120px; padding-top: 1px; }
.r3 .cid { grid-column: 4; }
.sq { height: 27px; position: relative; }
.sq .cal { width: 20px; height: 20px; }
.two .cal { width: 16px; height: 16px; margin: 0 4px 6px 0; }
.sq .bino { width: 15px; height: 14px; margin-top: 6px; }
.two .bino { position: absolute; right: 2px; bottom: 2px; }
.bino.off { color: #999; }
.clip { overflow: hidden; }
.check { width: 15px; height: 15px; background: #fff; border: 2px solid; border-color: #777 #eee #eee #777; display: block; }
.inter { color: #a00014; }
.spin { display: flex; flex-direction: column; }
.spin i { height: 14px; font-size: 10px; line-height: 9px; }
.cid { height: 27px; gap: 5px; }
.locked svg { width: 82px; height: 91px; }
.script { font: italic 14px "Liberation Serif", serif; fill: #222; }
.validity { background: #dcecff; border-left: 1px solid #888; padding-left: 8px; display: flex; flex-direction: column; align-items: center; }
.validity .inp { width: 100%; flex: none; }
.vl { height: 18px; line-height: 19px; }

.tabs { height: 55px; padding-top: 4px; border-bottom: 1px solid #ddd; display: grid; grid-template-columns: 78px 108px 149px 125px 109px 51px 65px 76px 72px 92px 83px 77px 82px; }
.tabs span { height: 48px; background: #dcd7cd; border: 1px solid; border-color: #ccc #555 #dcd7cd #fff; border-right-width: 2px; display: flex; align-items: center; justify-content: center; padding: 2px 0 0 2px; }
.tabs span:first-child { justify-content: flex-end; padding-right: 5px; }
.tabs .img { justify-content: flex-start; padding-left: 6px; }
.tabs .sel { background: #001a6b; color: #fff; height: 52px; margin-top: -2px; padding: 0 0 4px; border-color: #ccc #777 #777 #fff; }

.diet { height: 94px; border-bottom: 2px solid #111; }
.legend { display: flex; align-items: center; height: 24px; gap: 5px; color: #00007a; font-size: 16px; }
.legend hr, .rlegend hr { border: 0; height: 2px; background: #111; margin: 0; width: 3px; }
.legend hr:last-child { flex: 1; margin-bottom: 2px; }
.dietbody { display: flex; justify-content: space-between; }
.dtable { width: 870px; }
.dhead { height: 24px; background: #0072b8; color: #fff; font-size: 16px; display: flex; justify-content: space-between; align-items: center; padding: 0 1px 0 11px; }
.drow { display: grid; grid-template-columns: 9px 786px 75px; height: 22px; }
.drow > i:last-child { border-right: 1px solid #bbb; }
.fill { background: #001a6b; color: #fff; }
.mark { background: #0072b8; display: flex; align-items: center; }
.mark::before { content: ""; border: 6px solid transparent; border-left: 6px solid #000; border-right: 0; }
.suspender { width: 102px; height: 69px; font-size: 16px; }

.band { height: 22px; background: #0a507c; color: #fff; font-size: 16px; display: flex; align-items: center; justify-content: center; }
.solutions .band { padding-right: 5px; }
.thead { height: 24px; background: #0072b8; color: #fff; font-size: 16px; display: grid; align-items: center; }
.trow { height: 22px; display: grid; }
.sol { grid-template-columns: 306px 193px 56px 193px 144px 79px 1fr; }
.thead.sol b { margin-left: 2px; }
.thead.sol b:first-child { margin-left: 11px; }
.trow.sol i { border-right: 1px solid #bbb; }
.trow.sol i:last-child { border-right: 0; }
.trow.sol .mark { background: linear-gradient(90deg, #0072b8 8px, #fff 8px); }
.hscroll { height: 20px; background: #eeebe6; display: flex; align-items: stretch; border-bottom: 1px solid #777; }
.solutions .hscroll { margin-top: 60px; border: 0; }
.arr { width: 13px; font-size: 13px; line-height: 10px; }
.thumb { width: 18px; margin-left: 1px; }
.end { margin-left: auto; width: 15px; }

.lower { height: 434px; border-bottom: 2px solid #111; display: flex; flex-direction: column; }
.meds { display: grid; grid-template-columns: 20px 23px 20px 10px 754px 1082px 29px; justify-content: start; }
.meds > * { grid-row: 1; }
.meds svg { width: 20px; height: 20px; }
.meds > :nth-child(2) { grid-column: 3; }
.include { grid-column: 5; }
.meds > b { grid-column: 6; }
.help { grid-column: 7; }
.split { display: flex; flex: 1; min-height: 0; }
.left { width: 1759px; }
.thead.med { grid-template-columns: 39px 58px 85px 287px 195px 57px 145px 115px 184px 81px 1fr; }
.thead.med b:first-child { padding-left: 10px; align-self: start; }
.trow.med { grid-template-columns: 8px 29px 57px 86px 286px 195px 58px 145px 115px 184px 81px 1fr; background: #dce9ff; font-size: 15px; line-height: 24px; }
.trow.med span { border-right: 1px solid #bcc6d8; padding-left: 3px; overflow: hidden; white-space: nowrap; }
.trow.med .r { text-align: right; padding-right: 6px; }
.trow.med .noline { border: 0; }
.note { height: 271px; padding-top: 98px; display: flex; flex-direction: column; align-items: center; font-size: 75px; line-height: 74px; color: #000; }
.note p { margin: 0 0 0 608px; transform: scaleX(1.1); }
.note p:last-child { margin-left: 638px; }
.others { border-top: 1px solid #555; }
.ohead { width: 725px; height: 24px; background: #008000; color: #e8ffe8; font-size: 16px; padding-left: 11px; line-height: 25px; }
.orow { width: 726px; height: 22px; border-right: 1px solid #bbb; display: flex; }
.orow .mark { width: 9px; background: #008000; }
.routes { flex: 1; border-left: 2px solid #222; }
.rlegend { display: flex; height: 18px; align-items: center; font-size: 13.500px; }
.rlegend hr { width: 8px; height: 1px; margin-bottom: 4px; }
.rlegend hr:last-child { flex: 1; }
.routes .bevel { height: 20.780px; font-size: 13.500px; }

.toolbar { height: 73px; background: #dcd7cd; border-top: 2px solid #777; border-bottom: 2px solid #888; box-shadow: inset 0 1px #fff; margin-top: 1px; display: flex; }
.group { display: flex; flex-direction: column; }
.nav { width: 451px; border-right: 1px solid #888; }
.labels { height: 19px; display: flex; align-items: center; padding-top: 1px; }
.nav .labels { display: grid; grid-template-columns: 200px 151px 100px; margin-left: -4px; }
.nav .labels b { color: #00009c; }
.nav .btns { display: grid; grid-template-columns: 41px 50px 50px 50px 50px 50px 50px 50px 50px; gap: 1px; height: 44px; }
.nav .btns svg { width: 32px; height: 34px; }
.nav .btns .wide svg { width: 40px; height: 40px; }
.focus { border: 2px solid #111; outline: 1px dotted #111; outline-offset: -7px; }
.print { padding-left: 3px; }
.print .btns { display: grid; grid-template-columns: 137px 87px 106px 75px 49px 59px 76px 89px 46px 75px 161px; gap: 1px; height: 44px; }
.print .btns .bevel { flex-direction: column; font-size: 14px; line-height: 17px; padding-bottom: 2px; position: relative; }
.print .btns .big, .print .btns .b2 { font-size: 15.500px; line-height: 19px; }
.print .btns .b1 { flex-direction: row; justify-content: flex-start; padding-left: 17px; gap: 4px; }
.b1 svg { width: 33px; height: 30px; }
.print .tall { height: 47px; }
.btns .check { position: absolute; top: 4px; right: 5px; }
.b1 .check { right: 7px; }
.b1 .check:last-child { top: 25px; }
.covid { margin-left: auto; width: 155px; padding-top: 2px; display: flex; flex-direction: column; }
.covid .bevel { height: 21px; font-size: 13.500px; }

.status { height: 21px; background: #dcd7cd; display: flex; justify-content: space-between; align-items: center; }
.status span:first-child { margin-left: -4px; }
.status .copy { font: 14px "Liberation Serif", serif; margin-right: -8px; }

.taskbar { height: 60px; background: #dcd7cd; border-top: 3px solid #f7f5f1; display: grid; grid-template-columns: 63px 11px 10px 59px repeat(8, 61.200px) repeat(10, 61.300px) 58px 388px 1fr; padding-top: 4px; overflow: hidden; }
.start { justify-content: flex-start; gap: 2px; font-family: "DejaVu Sans Condensed", "Liberation Sans", sans-serif; font-size: 14px; padding-bottom: 6px; }
.start svg { width: 12px; height: 20px; }
.taskbar > .sep { grid-column: 3; margin-left: -1px; height: 60px; }
.task { display: flex; justify-content: center; padding-top: 4px; height: 60px; }
.task svg { width: 39px; height: 44px; }
.raised { border-left: 1px solid #fff; border-right: 2px solid #666; border-top: 1px solid #fff; }
.teal { color: #13a6b8; }
.teal svg, .pressed svg { background: #fff; }
.pressed { color: #c0206a; background: #fff; border-left: 2px solid #555; border-top: 2px solid #555; }
.pressed svg { background: #cdc6c4; }
.cmd { font: bold 9px "Liberation Mono", monospace; fill: #fff; }
.lang { border-right: 1px solid #fff; display: flex; justify-content: flex-end; gap: 7px; padding: 4px 7px 0 0; font: 15px "Liberation Sans", sans-serif; }
.lang span { line-height: 30px; }
.lang svg { width: 22px; height: 20px; margin-top: 6px; }
.lang .sep { height: 30px; }
.tray { border-left: 1px solid #777; border-top: 1px solid #777; display: flex; gap: 8px; padding: 11px 0 0 7px; }
.tray svg { width: 22px; height: 24px; }
.tray .chev { width: 9px; height: 16px; margin: 3px 3px 0 0; }
.clock { width: 78px; margin: -9px -4px 0 0; display: flex; flex-direction: column; align-items: center; font-size: 14px; line-height: 20px; }
.tray .mon { width: 18px; height: 16px; margin-top: 6px; }

.highlight { position: absolute; left: 1733px; top: 512px; width: 260px; height: 469px; border: 10px solid #a90000; border-radius: 9px; }
```
FILE: fit.js
```js
// Spread each label's letters so that it takes the width given in data-w.
document.querySelectorAll('[data-w]').forEach(function (el) {
  el.style.letterSpacing = '0px';
  var natural = el.tagName === 'P' && el.parentNode.className === 'note' ? el.offsetWidth : (function () {
    var range = document.createRange();
    range.selectNodeContents(el);
    return range.getBoundingClientRect().width;
  })();
  var gap = (Number(el.dataset.w) - natural) / el.textContent.length;
  el.style.letterSpacing = gap.toFixed(3) + 'px';
});
```
